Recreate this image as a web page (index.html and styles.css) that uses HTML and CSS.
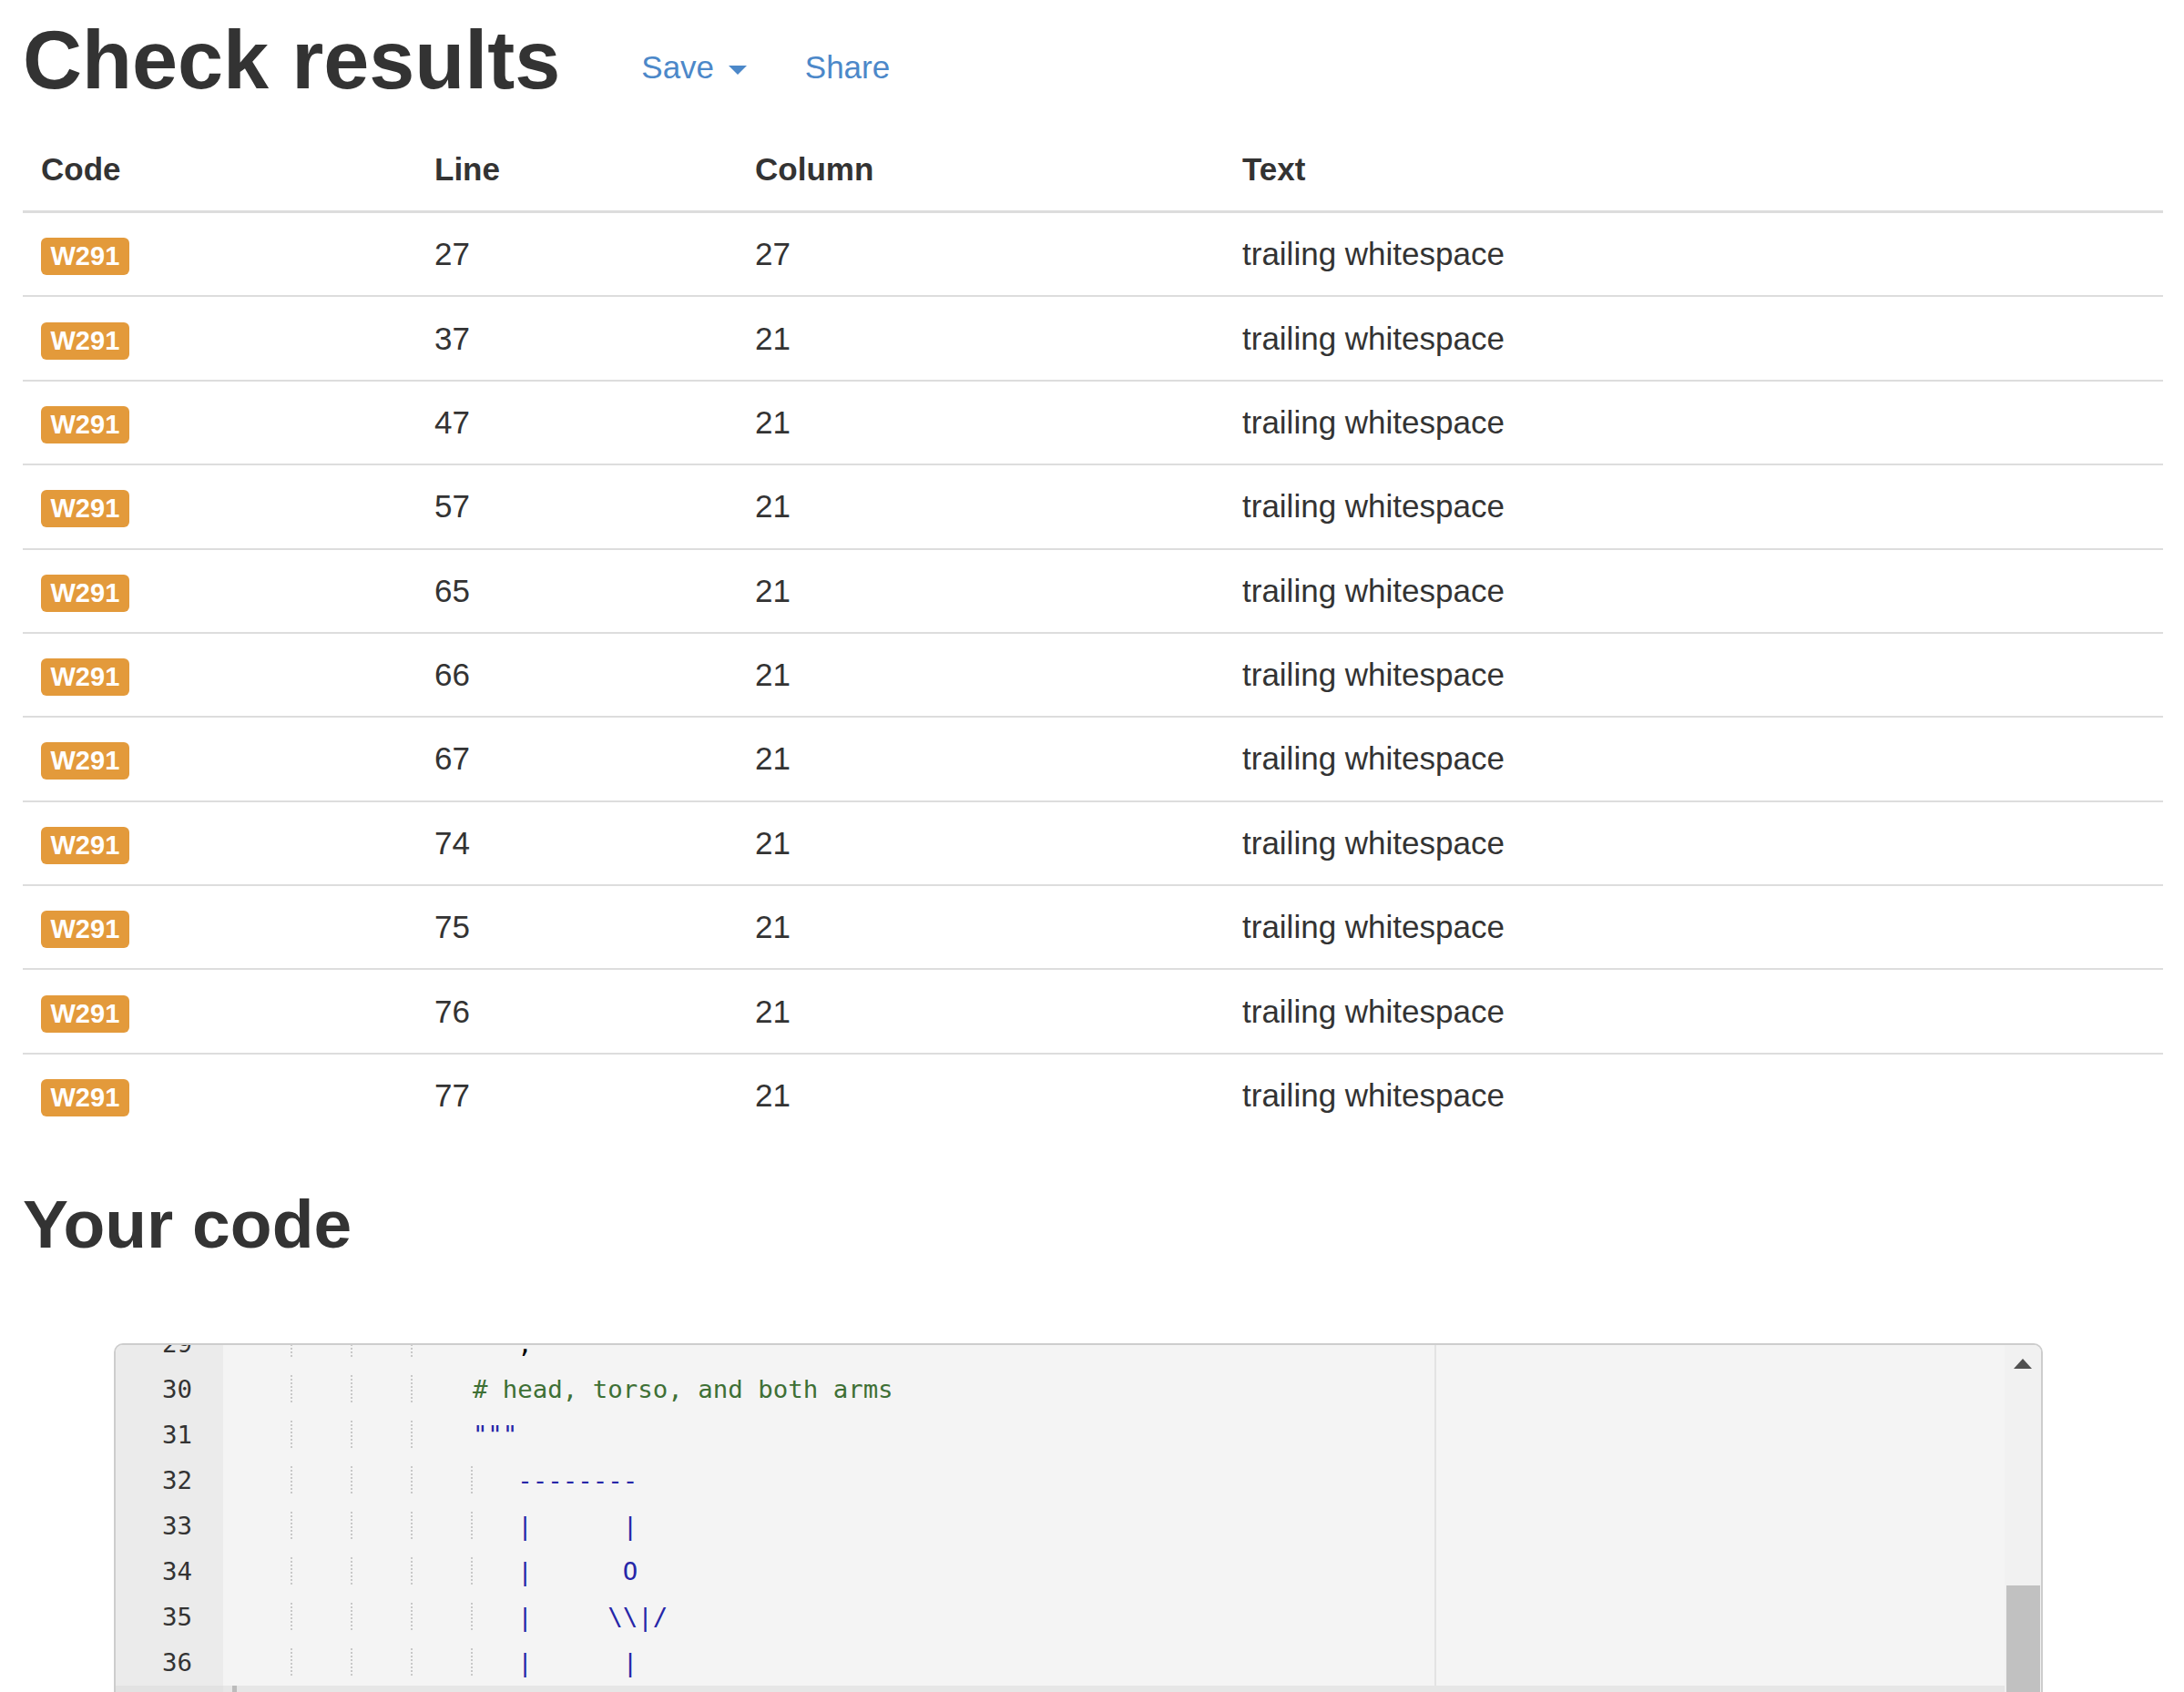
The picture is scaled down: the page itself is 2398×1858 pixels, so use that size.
FILE: index.html
```html
<!DOCTYPE html>
<html lang="en">
<head>
<meta charset="utf-8">
<title>Check results</title>
<link rel="stylesheet" href="styles.css">
</head>
<body>
<div class="page">
  <div class="title-row">
    <h1>Check results</h1>
    <div class="actions">
      <a class="act save" href="#">Save <span class="caret"></span></a>
      <a class="act share" href="#">Share</a>
    </div>
  </div>

  <table class="results">
    <colgroup>
      <col class="c-code"><col class="c-line"><col class="c-col"><col class="c-text">
    </colgroup>
    <thead>
      <tr><th>Code</th><th>Line</th><th>Column</th><th>Text</th></tr>
    </thead>
    <tbody>
      <tr><td><span class="badge">W291</span></td><td>27</td><td>27</td><td>trailing whitespace</td></tr>
      <tr><td><span class="badge">W291</span></td><td>37</td><td>21</td><td>trailing whitespace</td></tr>
      <tr><td><span class="badge">W291</span></td><td>47</td><td>21</td><td>trailing whitespace</td></tr>
      <tr><td><span class="badge">W291</span></td><td>57</td><td>21</td><td>trailing whitespace</td></tr>
      <tr><td><span class="badge">W291</span></td><td>65</td><td>21</td><td>trailing whitespace</td></tr>
      <tr><td><span class="badge">W291</span></td><td>66</td><td>21</td><td>trailing whitespace</td></tr>
      <tr><td><span class="badge">W291</span></td><td>67</td><td>21</td><td>trailing whitespace</td></tr>
      <tr><td><span class="badge">W291</span></td><td>74</td><td>21</td><td>trailing whitespace</td></tr>
      <tr><td><span class="badge">W291</span></td><td>75</td><td>21</td><td>trailing whitespace</td></tr>
      <tr><td><span class="badge">W291</span></td><td>76</td><td>21</td><td>trailing whitespace</td></tr>
      <tr><td><span class="badge">W291</span></td><td>77</td><td>21</td><td>trailing whitespace</td></tr>
    </tbody>
  </table>

  <h2>Your code</h2>

  <div class="editor">
    <div class="cm-main">
      <div class="cm-view">
        <div class="cm-lines">
          <div class="cm-line"><span class="ln">29</span><span class="code"><span class="g">    </span><span class="g">    </span><span class="g">    </span><span>    </span><span class="str">"""</span>,</span></div>
          <div class="cm-line"><span class="ln">30</span><span class="code"><span class="g">    </span><span class="g">    </span><span class="g">    </span><span>    </span><span class="cmt"># head, torso, and both arms</span></span></div>
          <div class="cm-line"><span class="ln">31</span><span class="code"><span class="g">    </span><span class="g">    </span><span class="g">    </span><span>    </span><span class="str">"""</span></span></div>
          <div class="cm-line"><span class="ln">32</span><span class="code"><span class="g str">    </span><span class="g str">    </span><span class="g str">    </span><span class="g str">    </span><span class="str">   --------</span></span></div>
          <div class="cm-line"><span class="ln">33</span><span class="code"><span class="g str">    </span><span class="g str">    </span><span class="g str">    </span><span class="g str">    </span><span class="str">   |      |</span></span></div>
          <div class="cm-line"><span class="ln">34</span><span class="code"><span class="g str">    </span><span class="g str">    </span><span class="g str">    </span><span class="g str">    </span><span class="str">   |      O</span></span></div>
          <div class="cm-line"><span class="ln">35</span><span class="code"><span class="g str">    </span><span class="g str">    </span><span class="g str">    </span><span class="g str">    </span><span class="str">   |     \\|/</span></span></div>
          <div class="cm-line"><span class="ln">36</span><span class="code"><span class="g str">    </span><span class="g str">    </span><span class="g str">    </span><span class="g str">    </span><span class="str">   |      |</span></span></div>
          <div class="cm-line"><span class="ln">37</span><span class="code"><span class="g str">    </span><span class="g str">    </span><span class="g str">    </span><span class="g str">    </span><span class="str">   |</span></span></div>
        </div>
      </div>
      <div class="cm-hscroll"></div>
    </div>
    <div class="cm-vscroll">
      <svg class="arrow" width="20" height="11" viewBox="0 0 20 11"><polygon points="10,0 20,11 0,11" fill="#505050"/></svg>
      <div class="thumb"></div>
    </div>
  </div>
</div>
</body>
</html>
```

FILE: styles.css
```css
* { box-sizing: border-box; }

html, body {
  margin: 0;
  overflow: hidden;
  background: #fff;
}

body {
  font-family: "Liberation Sans", Arial, Helvetica, sans-serif;
  font-size: 35px;
  line-height: 50px;
  color: #333;
}

.page {
  padding: 0 23px 0 25px;
}

/* ---------- title ---------- */
.title-row {
  display: flex;
  align-items: flex-start;
  margin-top: 13px;
}

h1 {
  margin: 0;
  padding-top: 4px;
  font-size: 90px;
  line-height: 99px;
  font-weight: 700;
  color: #333;
}

.actions {
  display: flex;
  padding-top: 36px;
  margin-left: 89px;
}

.act {
  color: #4c88c9;
  text-decoration: none;
  line-height: 50px;
}

.share {
  margin-left: 64px;
}

.caret {
  display: inline-block;
  width: 0;
  height: 0;
  margin-left: 6px;
  vertical-align: middle;
  border-top: 10px solid #4c88c9;
  border-left: 10px solid transparent;
  border-right: 10px solid transparent;
}

/* ---------- results table ---------- */
.results {
  width: 2350px;
  margin-top: 25px;
  border-collapse: separate;
  border-spacing: 0;
  table-layout: fixed;
}

.c-code { width: 432px; }
.c-line { width: 352px; }
.c-col  { width: 535px; }
.c-text { width: 1031px; }

.results th,
.results td {
  text-align: left;
  vertical-align: top;
  line-height: 50px;
  padding: 20.2px 20px;
}

.results th {
  font-weight: 700;
  padding: 20px;
  border-bottom: 3px solid #ddd;
}

.results tbody td {
  border-top: 2px solid #ddd;
}

.results tbody tr:first-child td {
  border-top: 0;
}

.badge {
  display: inline-block;
  background: #e39a3b;
  color: #fff;
  font-weight: 700;
  font-size: 29px;
  line-height: 29px;
  padding: 6px 10.5px;
  border-radius: 6px;
}

/* ---------- your code ---------- */
h2 {
  margin: 55px 0 0;
  font-size: 75px;
  line-height: 82.5px;
  font-weight: 700;
  color: #333;
}

.editor {
  margin: 89px 0 0 100px;
  width: 2118px;
  height: 398px;
  border: 2px solid #cdcdcd;
  border-radius: 10px;
  display: flex;
  overflow: hidden;
  background: #f4f4f4;
}

.cm-main {
  width: 2074px;
  display: flex;
  flex-direction: column;
}

.cm-view {
  height: 374px;
  overflow: hidden;
  background:
    linear-gradient(#e3e3e3, #e3e3e3) no-repeat 1448px 0 / 2px 100%,
    linear-gradient(to right, #ebebeb 118px, #f4f4f4 118px);
  font-family: "DejaVu Sans Mono", "Liberation Mono", monospace;
  font-size: 27.4px;
}

.cm-lines {
  margin-top: -25.5px;
}

.cm-line {
  display: flex;
  height: 50px;
  line-height: 50px;
  white-space: pre;
}

.ln {
  width: 118px;
  padding-right: 34px;
  text-align: right;
  color: #333;
  flex: none;
}

.code {
  padding-left: 10px;
  color: #000;
}

.g {
  background: repeating-linear-gradient(to bottom, #c8c8c8 0 2px, transparent 2px 4px) right top / 2px 100% no-repeat;
}

.str { color: #2626a8; }
.cmt { color: #3e7035; }

.cm-hscroll {
  height: 20px;
  background: linear-gradient(to right,
    #e2e2e2 0 118px,
    #e7e7e7 118px 128px,
    #bcbcbc 128px 133px,
    #e6e6e6 133px);
}

.cm-vscroll {
  width: 40px;
  flex: none;
  background: #f1f1f1;
  display: flex;
  flex-direction: column;
  align-items: center;
  padding-top: 15px;
  overflow: hidden;
}

.arrow {
  display: block;
  flex: none;
}

.thumb {
  flex: none;
  width: 37px;
  height: 200px;
  margin-top: 238px;
  background: #c1c1c1;
}
```
